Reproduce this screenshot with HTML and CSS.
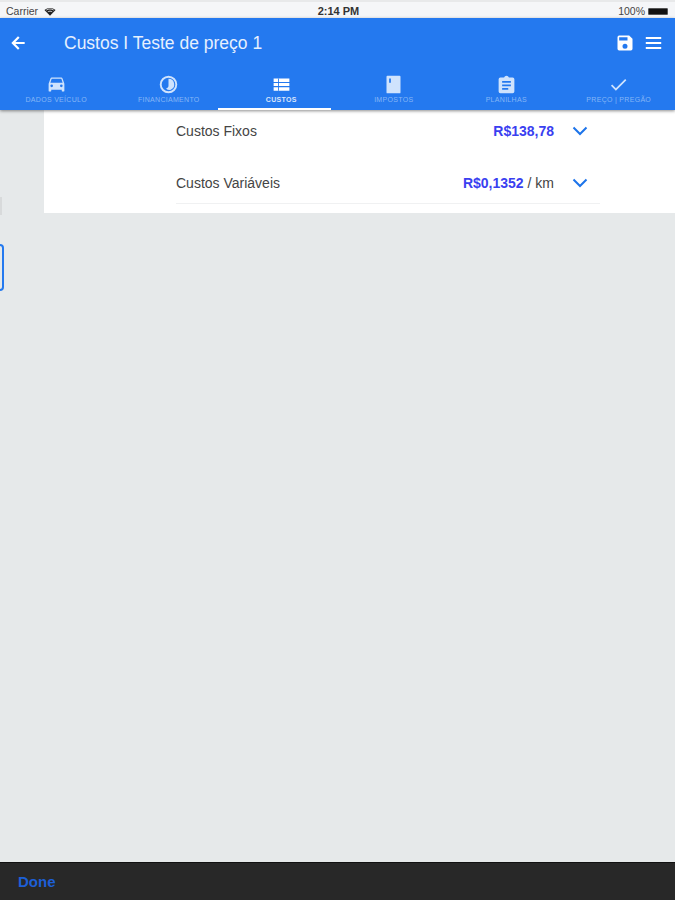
FILE: index.html
```html
<!DOCTYPE html>
<html lang="en">
<head>
  <meta charset="UTF-8" />
  <meta name="viewport" content="width=device-width, initial-scale=1.0"/>
  <title>Custos</title>
  <link rel="stylesheet" href="styles.css">
</head>
<body>

  <div class="status-bar">
    <div class="status-left">
      <span>Carrier</span>
      <svg class="wifi" viewBox="0 0 14 10"><path d="M7 10 0.5 3.2C4.2 0 9.8 0 13.5 3.2Z" fill="#222"/><path d="M2.6 3.4C5.2 1.6 8.8 1.6 11.4 3.4" stroke="#f4f5f7" stroke-width="0.9" fill="none"/><path d="M4.4 5.4C6 4.4 8 4.4 9.6 5.4" stroke="#f4f5f7" stroke-width="0.9" fill="none"/></svg>
    </div>
    <span class="status-time">2:14 PM</span>
    <div class="status-right">
      <span>100%</span>
      <span class="battery"></span>
    </div>
  </div>

  <header class="app-bar">
    <div class="title-row">
      <svg class="back-icon" viewBox="0 0 24 24"><path d="M20 10.700H8.900l5-5L12 4l-8 8 8 8 1.800-1.700-5-5H20z" fill="#fff"/></svg>
      <h1>Custos I Teste de preço 1</h1>
      <svg class="save-icon" viewBox="0 0 24 24"><path d="M17 3H5a2 2 0 0 0-2 2v14a2 2 0 0 0 2 2h14a2 2 0 0 0 2-2V7zm-5 16a3 3 0 1 1 0-6 3 3 0 0 1 0 6zm3-10H5V5h10z" fill="#fff"/></svg>
      <svg class="menu-icon" viewBox="0 0 18 14"><path d="M0 0h18v2.2H0zM0 5.9h18v2.2H0zM0 11.8h18V14H0z" fill="#fff"/></svg>
    </div>

    <nav class="tabs">
      <div class="tab">
        <svg viewBox="0 0 24 24"><path d="M18.9 5c-.2-.6-.8-1-1.400-1h-11c-.7 0-1.200.4-1.400 1L3 11v8c0 .6.400 1 1 1h1c.6 0 1-.4 1-1v-1h12v1c0 .6.400 1 1 1h1c.6 0 1-.4 1-1v-8zM6.500 15a1.500 1.500 0 1 1 0-3 1.500 1.500 0 0 1 0 3zm11 0a1.500 1.500 0 1 1 0-3 1.500 1.500 0 0 1 0 3zM5 10l1.500-4.500h11L19 10z"/></svg>
        <span>DADOS VEÍCULO</span>
      </div>
      <div class="tab">
        <svg viewBox="0 0 24 24"><path fill-rule="evenodd" d="M12 2a10 10 0 1 0 0 20 10 10 0 0 0 0-20zm0 2.200a7.800 7.800 0 1 1 0 15.600 7.800 7.800 0 0 1 0-15.600z"/><path d="M12 5.500a6.500 6.500 0 0 1 2 12.700 6.500 6.500 0 0 1-5-1.700c1.800-.4 3-1.500 3-3.500z"/></svg>
        <span>FINANCIAMENTO</span>
      </div>
      <div class="tab active">
        <svg viewBox="0 0 24 24"><path d="M3 5h18v4H3zM3 10.200h18v3.600H3zM3 15h18v4H3z"/><path d="M8 5h1v14H8z" fill="#2479ef"/></svg>
        <span>CUSTOS</span>
      </div>
      <div class="tab">
        <svg viewBox="0 0 24 24"><path fill-rule="evenodd" d="M5 2h14a1 1 0 0 1 1 1v18a1 1 0 0 1-1 1H5a1 1 0 0 1-1-1V3a1 1 0 0 1 1-1zm2 3v5h2V5z"/></svg>
        <span>IMPOSTOS</span>
      </div>
      <div class="tab">
        <svg viewBox="0 0 24 24"><path fill-rule="evenodd" d="M19 4h-4.200a3 3 0 0 0-5.600 0H5a2 2 0 0 0-2 2v14a2 2 0 0 0 2 2h14a2 2 0 0 0 2-2V6a2 2 0 0 0-2-2zM7 8h10v2H7zm0 4h10v2H7zm0 4h7v2H7z"/></svg>
        <span>PLANILHAS</span>
      </div>
      <div class="tab">
        <svg viewBox="0 0 24 24"><path d="M9 16.200 4.800 12l-1.400 1.400L9 19 21 7l-1.400-1.400z"/></svg>
        <span>PREÇO | PREGÃO</span>
      </div>
    </nav>
  </header>

  <main class="content">
    <aside class="gutter">
      <div class="gutter-mark"></div>
      <div class="gutter-field"></div>
    </aside>

    <section class="panel">
      <div class="cost-list">
        <div class="cost-row">
          <span class="cost-name">Custos Fixos</span>
          <span class="cost-value"><b>R$138,78</b></span>
          <svg class="chevron" viewBox="0 0 16 10"><path d="M1.500 1.500 8 8l6.500-6.500" /></svg>
        </div>
        <div class="cost-row">
          <span class="cost-name">Custos Variáveis</span>
          <span class="cost-value"><b>R$0,1352</b> / km</span>
          <svg class="chevron" viewBox="0 0 16 10"><path d="M1.500 1.500 8 8l6.500-6.500" /></svg>
        </div>
      </div>
    </section>
  </main>

  <footer class="keyboard-bar">
    <span>Done</span>
  </footer>

</body>
</html>
```

FILE: styles.css
```css
* {
  box-sizing: border-box;
}

html, body {
  height: 100%;
}

body {
  margin: 0;
  display: flex;
  flex-direction: column;
  height: 900px;
  overflow: hidden;
  font-family: 'Liberation Sans', Arial, sans-serif;
  background-color: #e6e9ea;
  color: #333;
}

.status-bar {
  height: 18px;
  padding: 2px 6px 0;
  display: flex;
  align-items: center;
  justify-content: space-between;
  background-color: #f5f6f8;
  border-top: 2px solid #e8e9ea;
  font-size: 10.500px;
  color: #444;
}

.status-left,
.status-right {
  width: 130px;
  display: flex;
  align-items: center;
  gap: 6px;
}

.status-right {
  justify-content: flex-end;
  gap: 3px;
  padding-right: 1px;
}

.status-time {
  font-weight: bold;
  font-size: 11px;
  color: #333;
  padding-left: 2px;
}

.wifi {
  width: 12px;
  height: 9px;
}

.battery {
  width: 20px;
  height: 7px;
  background-color: #111;
  border: 1px solid #555;
  border-radius: 1px;
}

.app-bar {
  height: 92px;
  background-color: #2479ef;
  box-shadow: 0 1px 3px rgba(0, 0, 0, 0.45);
  color: #fff;
  position: relative;
  z-index: 1;
}

.title-row {
  height: 50px;
  padding: 0 13px 0 8px;
  display: flex;
  align-items: center;
}

.title-row h1 {
  margin: 0 0 0 36px;
  flex: 1;
  font-size: 17.500px;
  font-weight: normal;
  color: #e6f0fe;
}

.back-icon {
  width: 20px;
  height: 20px;
}

.save-icon {
  width: 20px;
  height: 20px;
  margin-right: 10px;
}

.menu-icon {
  width: 17px;
  height: 12px;
}

.tabs {
  display: grid;
  grid-template-columns: repeat(6, 1fr);
  height: 42px;
}

.tab {
  position: relative;
  display: flex;
  flex-direction: column;
  align-items: center;
  padding-top: 6px;
  gap: 2px;
  color: #b9d6fb;
}

.tab svg {
  width: 21px;
  height: 21px;
  margin-bottom: -1px;
  fill: #cfe3fd;
}

.tab span {
  font-size: 7px;
  letter-spacing: 0.3px;
  white-space: nowrap;
  opacity: 0.65;
}

/* indicator sits a bit left of the tab it belongs to */
.tab.active::after {
  content: "";
  position: absolute;
  left: -7px;
  bottom: 0;
  width: 113px;
  height: 2px;
  background-color: #fff;
}

.tab.active {
  color: #e8f1fe;
}

.tab.active svg {
  fill: #fff;
}

.tab.active span {
  font-weight: bold;
  opacity: 0.9;
}

.content {
  flex: 1;
  display: flex;
  align-items: flex-start;
}

.gutter {
  width: 44px;
}

.gutter-mark {
  width: 2px;
  height: 18px;
  margin-top: 87px;
  background-color: #d8dadb;
}

.gutter-field {
  width: 4px;
  height: 47px;
  margin-top: 29px;
  border: 2px solid #2479ef;
  border-left: none;
  border-radius: 0 4px 4px 0;
}

.panel {
  flex: 1;
  height: 103px;
  background-color: #fff;
  padding-left: 132px;
  padding-right: 75px;
}

.cost-list {
  display: flex;
  flex-direction: column;
  gap: 10px;
  height: 94px;
  border-bottom: 1px solid #f0f1f2;
}

.cost-row {
  display: flex;
  align-items: center;
  height: 42px;
  font-size: 14px;
  color: #444;
}

.cost-row + .cost-row {
  padding-top: 1px;
}

.cost-name {
  flex: 1;
}

.cost-value b {
  font-weight: bold;
  color: #3a3ff0;
}

.chevron {
  width: 16px;
  height: 10px;
  margin-left: 18px;
  margin-right: 12px;
  fill: none;
  stroke: #1d74ea;
  stroke-width: 2;
}

.keyboard-bar {
  height: 38px;
  padding-left: 18px;
  display: flex;
  align-items: center;
  background-color: #282828;
  border-top: 1px solid #111;
  font-size: 15px;
  font-weight: bold;
  color: #1d5fd6;
}
```
